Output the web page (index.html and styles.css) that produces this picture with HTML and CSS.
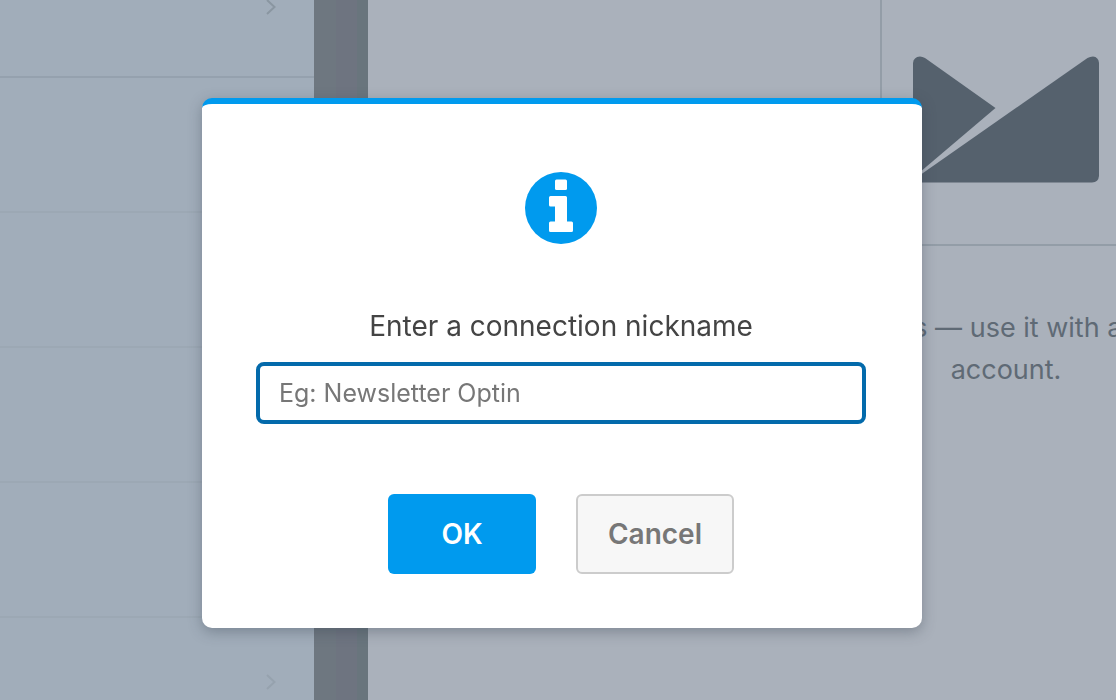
FILE: index.html
```html
<!DOCTYPE html>
<html lang="en">
<head>
    <meta charset="UTF-8">
    <meta name="viewport" content="width=device-width, initial-scale=1.0">
    <title>Connection</title>
    <link rel="stylesheet" href="styles.css">
</head>
<body>
    <div class="page">
        <div class="sidebar">
            <div class="row first">
                <svg class="chevron" viewBox="0 0 10 16"><path d="M1 1l7.500 7L1 15"/></svg>
            </div>
            <div class="row"></div>
            <div class="row"></div>
            <div class="row"></div>
            <div class="row"></div>
            <div class="row">
                <svg class="chevron" viewBox="0 0 10 16"><path d="M1 1l7.500 7L1 15"/></svg>
            </div>
        </div>
        <div class="strip"></div>
        <main class="content">
            <div class="provider">
                <svg class="logo" viewBox="0 0 186 127">
                    <path d="M0 7Q0.500 1 7 0.500Q9.500 0.500 12 2L82.500 52L0 122Z"/>
                    <path d="M174.500 2Q177 0.500 180 0.500Q185.500 1 186 7V120Q185.500 126 179 126.500H7Q1 126.500 0 124Z"/>
                </svg>
            </div>
            <p class="description">ms — use it with a<br>account.</p>
        </main>
    </div>

    <div class="overlay">
        <form class="modal" role="dialog">
            <svg class="info" viewBox="0 0 72 72">
                <circle cx="36" cy="36" r="36"/>
                <path d="M31.500 7.500h9a1.500 1.500 0 0 1 1.500 1.500v7.500a1.500 1.500 0 0 1-1.500 1.500h-9a1.500 1.500 0 0 1-1.500-1.500V9a1.500 1.500 0 0 1 1.500-1.500z"/>
                <path d="M25.500 24h15a1.500 1.500 0 0 1 1.500 1.500v24h4.500a1.500 1.500 0 0 1 1.500 1.500v7.500a1.500 1.500 0 0 1-1.500 1.500h-21a1.500 1.500 0 0 1-1.500-1.500V51a1.500 1.500 0 0 1 1.500-1.500H30V34.500h-4.500A1.500 1.500 0 0 1 24 33v-7.500a1.500 1.500 0 0 1 1.500-1.500z"/>
            </svg>
            <label for="nickname">Enter a connection nickname</label>
            <input type="text" id="nickname" placeholder="Eg: Newsletter Optin">
            <div class="buttons">
                <button type="button" class="ok">OK</button>
                <button type="button" class="cancel">Cancel</button>
            </div>
        </form>
    </div>
</body>
</html>
```
FILE: styles.css
```css
* {
    box-sizing: border-box;
}
body {
    margin: 0;
    font-family: Inter, "Liberation Sans", sans-serif;
    background-color: #aab1bb;
}
.page {
    display: flex;
    height: 100vh;
    overflow: hidden;
}
.sidebar {
    flex: 0 0 314px;
    margin-top: -57px;
    background-color: #a1adba;
}
.row {
    display: flex;
    align-items: center;
    justify-content: flex-end;
    height: 135px;
    padding: 0 38px 6px 0;
    border-bottom: 2px solid #9ca8b4;
}
.row.first {
    border-color: #95a1ae;
}
.chevron {
    width: 10px;
    height: 16px;
    fill: none;
    stroke: #96a2ae;
    stroke-width: 2;
}
.first .chevron {
    stroke: #8a96a1;
}
.strip {
    flex: 0 0 54px;
    background: linear-gradient(to right, #6e7780 0 22px, #6e7480 22px 43px, #69757d 43px);
}
.content {
    flex: 1;
    min-width: 0;
    padding-left: 512px;
    overflow: hidden;
}
.provider {
    display: flex;
    justify-content: center;
    width: 252px;
    height: 246px;
    padding-top: 56px;
    border: 2px solid #939da7;
    border-top: none;
}
.logo {
    width: 186px;
    height: 127px;
    fill: #55616d;
}
.description {
    width: 252px;
    margin: 61px 0 0;
    font-size: 27px;
    line-height: 42px;
    text-align: center;
    white-space: nowrap;
    color: #5f6a75;
}
.overlay {
    position: fixed;
    inset: 0;
    display: flex;
    align-items: center;
    justify-content: center;
    padding: 26px 0 0 8px;
}
.modal {
    display: flex;
    flex-direction: column;
    align-items: center;
    width: 100%;
    max-width: 720px;
    padding: 68px 56px 54px 54px;
    background-color: #fff;
    border-top: 6px solid #009aee;
    border-radius: 10px;
    box-shadow: 0 4px 14px rgba(50, 60, 75, 0.35);
}
.info {
    width: 72px;
    height: 72px;
    fill: #fff;
}
.info circle {
    fill: #009aee;
}
label {
    margin: 64px 0 18px;
    font-size: 28px;
    line-height: 36px;
    color: #444;
}
input {
    width: 100%;
    height: 62px;
    padding: 0 19px;
    font-family: inherit;
    font-size: 25px;
    color: #444;
    background-color: #fff;
    border: 4px solid #036aab;
    border-radius: 8px;
    outline: none;
}
input::placeholder {
    color: #777;
}
.buttons {
    display: flex;
    gap: 40px;
    margin-top: 70px;
}
button {
    height: 80px;
    font-family: inherit;
    font-size: 28px;
    font-weight: 600;
    border-radius: 6px;
    cursor: pointer;
}
.ok {
    width: 148px;
    color: #fff;
    background-color: #009aee;
    border: none;
}
.cancel {
    width: 158px;
    padding: 0;
    color: #777;
    background-color: #f7f7f7;
    border: 2px solid #ccc;
}
```
